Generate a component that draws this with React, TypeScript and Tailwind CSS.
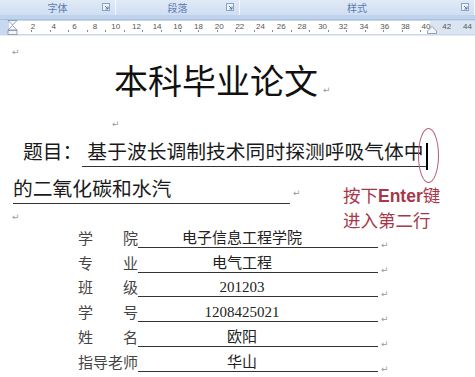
import React from "react";

const rulerNums = [2, 4, 6, 8, 10, 12, 14, 16, 18, 20, 22, 24, 26, 28, 30, 32, 34, 36, 38, 40, 42, 44];

const Ret = ({ className = "" }: { className?: string }) => (
  <span className={`text-[9px] leading-none text-[#9a9a9a] font-['DejaVu_Sans',sans-serif] ${className}`}>↵</span>
);

const Launcher = () => (
  <svg width="8" height="8" viewBox="0 0 8 8" className="shrink-0">
    <rect x="0.5" y="0.5" width="7" height="7" fill="#eef3fa" stroke="#8aa2c4" />
    <path d="M3 3 L6 6 M6 3.5 V6 H3.5" stroke="#4a6a98" strokeWidth="0.9" fill="none" />
  </svg>
);

const Group = ({ label, w }: { label: string; w: string }) => (
  <div className={`${w} h-full flex items-center justify-center relative border-r border-[#f4f8fd]`}>
    <span className="text-[10px] text-[#5a7db0] leading-none">{label}</span>
    <div className="absolute right-[5px] top-[3px]">
      <Launcher />
    </div>
  </div>
);

const rows = [
  { label: ["学", "院"], value: "电子信息工程学院" },
  { label: ["专", "业"], value: "电气工程" },
  { label: ["班", "级"], value: "201203" },
  { label: ["学", "号"], value: "1208425021" },
  { label: ["姓", "名"], value: "欧阳" },
  { label: ["指", "导", "老", "师"], value: "华山" },
];

export default function App() {
  return (
    <div className="w-[475px] h-[377px] overflow-hidden bg-white relative font-['Liberation_Serif','Noto_Sans_CJK_SC',serif] text-[#1a1a1a]">
      {/* ribbon group labels */}
      <div className="h-[15px] flex bg-gradient-to-b from-[#e1eaf6] to-[#cfdef2] font-['Noto_Sans_CJK_SC',sans-serif]">
        <Group label="字体" w="w-[116px]" />
        <Group label="段落" w="w-[124px]" />
        <Group label="样式" w="w-[235px]" />
      </div>
      <div className="h-[5px] bg-[#bfd3ec] border-b border-[#a9c0df]" />

      {/* ruler */}
      <div className="h-[15px] bg-[#c8d8ee] relative flex items-stretch">
        <div className="w-[9px]" />
        <div className="w-[421px] bg-white my-[1px] relative">
          <div className="absolute left-[0px] right-0 bottom-[2px] flex pl-[13.65px]">
            {rulerNums.map((n) => (
              <div key={n} className="w-[20.7px] h-[2px] flex justify-center">
                <div className="w-[1px] h-[2px] bg-[#8a8a8a]" />
              </div>
            ))}
          </div>
        </div>
        <div className="flex-1 bg-[#dbe5f2] my-[1px]" />
        <div className="absolute inset-0 flex items-center pl-[22.65px] font-['Liberation_Sans',sans-serif]">
          {rulerNums.map((n) => (
            <div key={n} className="w-[20.7px] shrink-0 text-center text-[8px] leading-none text-[#555] -mt-[2px]">
              {n}
            </div>
          ))}
        </div>
        {/* indent markers */}
        <svg className="absolute left-[7px] top-0" width="11" height="15" viewBox="0 0 11 15">
          <path d="M1 0.5 H10 L5.5 5 Z" fill="#f4f6fa" stroke="#7d8ea8" strokeWidth="0.8" />
          <path d="M5.5 5.5 L10 10 H1 Z" fill="#f4f6fa" stroke="#7d8ea8" strokeWidth="0.8" />
          <rect x="1" y="10.5" width="9" height="4" fill="#f4f6fa" stroke="#7d8ea8" strokeWidth="0.8" />
        </svg>
        <svg className="absolute left-[427px] top-[6px]" width="10" height="8" viewBox="0 0 10 8">
          <path d="M5 0.5 L9.5 5 V7.5 H0.5 V5 Z" fill="#f4f6fa" stroke="#7d8ea8" strokeWidth="0.8" />
        </svg>
      </div>
      <div className="h-[1px] bg-[#e6e9ee]" />

      {/* page */}
      <div className="flex flex-col">
        <div className="h-[26px] pl-[12px] pt-[12px] flex items-start">
          <Ret />
        </div>
        <div className="h-[36px] pl-[114px] flex items-center font-['Noto_Sans_CJK_SC',sans-serif]">
          <span className="text-[34px] leading-[36px] text-[#111]">本科毕业论文</span>
          <Ret className="mt-[20px] ml-[5px]" />
        </div>
        <div className="h-[44px] pl-[112px] pt-[22px] flex items-start">
          <Ret />
        </div>

        <div className="h-[27px] pl-[23px] flex items-start text-[19.8px] leading-[20px]">
          <span>题目：</span>
          <span className="inline-block w-[346px] h-[25px] border-b border-[#333] pl-[5px]">
            基于波长调制技术同时探测呼吸气体中
          </span>
        </div>

        <div className="h-[34px] pl-[13px] pt-[10px] flex items-start text-[19.8px] leading-[20px]">
          <span className="inline-block w-[277px] h-[25px] border-b border-[#333]">的二氧化碳和水汽</span>
          <Ret className="mt-[10px] ml-[3px]" />
        </div>

        <div className="h-[20px] pl-[12px] pt-[10px] flex items-start">
          <Ret />
        </div>

        <div className="flex flex-col text-[15px] leading-[15px]">
          {rows.map((r, i) => (
            <div key={i} className="h-[24.8px] flex items-end pl-[78px]">
              <div className="w-[60px] flex justify-between text-[#444] mb-[1px]">
                {r.label.map((c, j) => (
                  <span key={j}>{c}</span>
                ))}
              </div>
              <div className="w-[240px] border-b border-[#333] text-center text-[#222] pb-[1px] pr-[32px]">{r.value}</div>
              <Ret className="ml-[3px] mb-[-2px]" />
            </div>
          ))}
        </div>
      </div>

      {/* cursor + highlight */}
      <div className="absolute left-[426px] top-[143px] w-[2px] h-[27px] bg-black" />
      <div className="absolute left-[418px] top-[128px] w-[21px] h-[55px] rounded-[50%] border-[1.5px] border-[#b65a6e]" />

      {/* annotation */}
      <div className="absolute left-[343px] top-[183px] text-[17.5px] leading-[23px] text-[#a8374a] font-['Noto_Sans_CJK_SC',sans-serif]">
        <div>
          按下<span className="font-bold font-['Liberation_Sans','Noto_Sans_CJK_SC',sans-serif]">Enter</span>键
        </div>
        <div>进入第二行</div>
      </div>
    </div>
  );
}
